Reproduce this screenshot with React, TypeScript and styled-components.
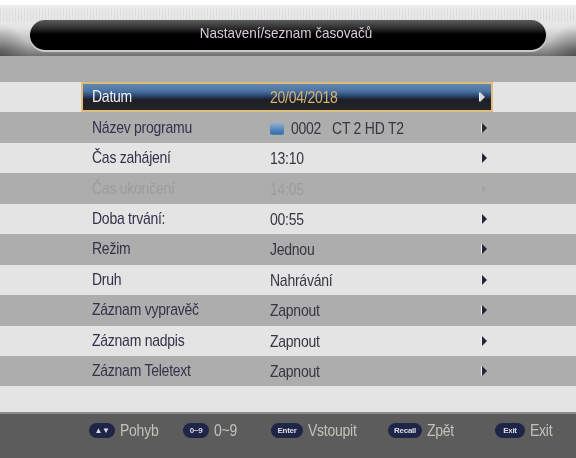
import styled, { createGlobalStyle } from "styled-components";

const rows = [
  { label: "Datum", value: "20/04/2018", selected: true },
  { label: "Název programu", value: "0002   CT 2 HD T2", channel: true },
  { label: "Čas zahájení", value: "13:10" },
  { label: "Čas ukončení", value: "14:05", disabled: true },
  { label: "Doba trvání:", value: "00:55" },
  { label: "Režim", value: "Jednou" },
  { label: "Druh", value: "Nahrávání" },
  { label: "Záznam vypravěč", value: "Zapnout" },
  { label: "Záznam nadpis", value: "Zapnout" },
  { label: "Záznam Teletext", value: "Zapnout" },
];

const hints = [
  { key: "▲▼", text: "Pohyb", keyWidth: 26, left: 89 },
  { key: "0~9", text: "0~9", keyWidth: 26, left: 183 },
  { key: "Enter", text: "Vstoupit", keyWidth: 32, left: 271 },
  { key: "Recall", text: "Zpět", keyWidth: 34, left: 388 },
  { key: "Exit", text: "Exit", keyWidth: 30, left: 495 },
];

const GlobalStyle = createGlobalStyle`
  html, body {
    margin: 0;
    padding: 0;
    background: #fff;
  }
  body {
    font-family: "Liberation Sans", Arial, sans-serif;
  }
`;

const App = () => {
  return (
    <Screen>
      <GlobalStyle />
      <Header>
        <TitleBar>
          <Title>Nastavení/seznam časovačů</Title>
        </TitleBar>
      </Header>
      <Spacer />
      <List>
        {rows.map((row, i) => (
          <Row key={row.label} $odd={i % 2 === 1}>
            <Content $selected={row.selected}>
              <Label $selected={row.selected} $disabled={row.disabled}>
                {row.label}
              </Label>
              <Value $selected={row.selected} $disabled={row.disabled}>
                {row.channel && <ChannelIcon />}
                {row.value}
              </Value>
              <Arrow $selected={row.selected} $disabled={row.disabled} />
            </Content>
          </Row>
        ))}
      </List>
      <Tail />
      <Footer>
        {hints.map((hint) => (
          <Hint key={hint.key} $left={hint.left}>
            <Key $width={hint.keyWidth}>{hint.key}</Key>
            <HintText>{hint.text}</HintText>
          </Hint>
        ))}
      </Footer>
    </Screen>
  );
};

const Screen = styled.div`
  width: 576px;
  height: 458px;
  padding-top: 5px;
  box-sizing: border-box;
  display: flex;
  flex-direction: column;
  overflow: hidden;
  background: #fff;
  filter: blur(0.5px);
`;

const Header = styled.header`
  height: 51px;
  padding: 15px 30px 6px;
  box-sizing: border-box;
  background:
    radial-gradient(ellipse 30px 32px at 0 100%, rgba(60, 60, 60, 0.6), rgba(60, 60, 60, 0)),
    radial-gradient(ellipse 30px 32px at 100% 100%, rgba(60, 60, 60, 0.6), rgba(60, 60, 60, 0)),
    repeating-linear-gradient(90deg, rgba(0, 0, 0, 0.05) 0 1px, rgba(0, 0, 0, 0) 1px 3px) 0 3px / 100% 13px no-repeat,
    linear-gradient(180deg, #ececec 0%, #e4e4e4 45%, #bcbcbc 72%, #707070 100%);
`;

const TitleBar = styled.div`
  height: 30px;
  display: flex;
  align-items: center;
  justify-content: center;
  border-radius: 15px;
  background: linear-gradient(180deg, #5c5c5c 0%, #2c2c2c 28%, #000 48%, #000 100%);
  box-shadow: 0 1px 0 1px #c9c9c9;
`;

const Title = styled.h1`
  margin: 0 4px 5px 0;
  font-size: 13.5px;
  font-weight: 400;
  color: #d9ccd9;
  transform: scaleY(1.15);
`;

const Spacer = styled.div`
  height: 26px;
  background: #adadad;
`;

const List = styled.div`
  display: flex;
  flex-direction: column;
`;

const Row = styled.div<{ $odd: boolean }>`
  height: 30.45px;
  padding-left: 81px;
  background: ${({ $odd }) => ($odd ? "#adadad" : "#e4e4e4")};
`;

const Content = styled.div<{ $selected?: boolean }>`
  width: 412px;
  height: 100%;
  padding-left: 11px;
  box-sizing: border-box;
  display: flex;
  align-items: center;
  ${({ $selected }) =>
    $selected &&
    `
    border: 2px solid #e0bd7c;
    padding-left: 9px;
    background: linear-gradient(180deg, #6488b2 0%, #4a72a2 28%, #27406a 48%, #1f2027 60%, #23232a 100%);
  `}
`;

const Label = styled.span<{ $selected?: boolean; $disabled?: boolean }>`
  width: 178px;
  font-size: 14px;
  letter-spacing: -0.25px;
  transform: scaleY(1.14) translateY(-1px);
  color: ${({ $selected, $disabled }) =>
    $selected ? "#f2f2f2" : $disabled ? "#9c9c9c" : "#34324a"};
`;

const Value = styled.span<{ $selected?: boolean; $disabled?: boolean }>`
  flex: 1;
  display: flex;
  align-items: center;
  white-space: pre;
  font-size: 14px;
  letter-spacing: -0.25px;
  transform: scaleY(1.14);
  color: ${({ $selected, $disabled }) =>
    $selected ? "#d8b56c" : $disabled ? "#9c9c9c" : "#36363f"};
`;

const ChannelIcon = styled.span`
  width: 14px;
  height: 11px;
  margin-right: 7px;
  border-radius: 2px;
  background: linear-gradient(180deg, #9fb2c8 0%, #5b8dbf 50%, #2c6aa8 100%);
`;

const Arrow = styled.span<{ $selected?: boolean; $disabled?: boolean }>`
  width: 0;
  height: 0;
  margin-right: 6px;
  border-style: solid;
  border-width: 5px 0 5px 5px;
  border-color: transparent transparent transparent
    ${({ $selected, $disabled }) =>
      $selected ? "#d8d8d8" : $disabled ? "#a5a5a5" : "#23233a"};
  filter: ${({ $disabled }) => ($disabled ? "none" : "drop-shadow(-1px 0 0 #f0f0f0)")};
`;

const Tail = styled.div`
  flex: 1;
  background: #e4e4e4;
`;

const Footer = styled.footer`
  position: relative;
  height: 46px;
  border-top: 2px solid #8b8b8b;
  box-sizing: border-box;
  background: #5c5c5c;
`;

const Hint = styled.div<{ $left: number }>`
  position: absolute;
  top: 8px;
  left: ${({ $left }) => $left}px;
  display: flex;
  align-items: center;
  gap: 5px;
`;

const Key = styled.span<{ $width: number }>`
  width: ${({ $width }) => $width}px;
  height: 15px;
  display: flex;
  align-items: center;
  justify-content: center;
  border-radius: 8px;
  font-size: 8px;
  font-weight: 700;
  letter-spacing: -0.3px;
  color: #dcdce8;
  background: #1e2547;
`;

const HintText = styled.span`
  font-size: 14px;
  letter-spacing: -0.25px;
  transform: scaleY(1.14);
  color: #c2c2ba;
`;

export default App;
